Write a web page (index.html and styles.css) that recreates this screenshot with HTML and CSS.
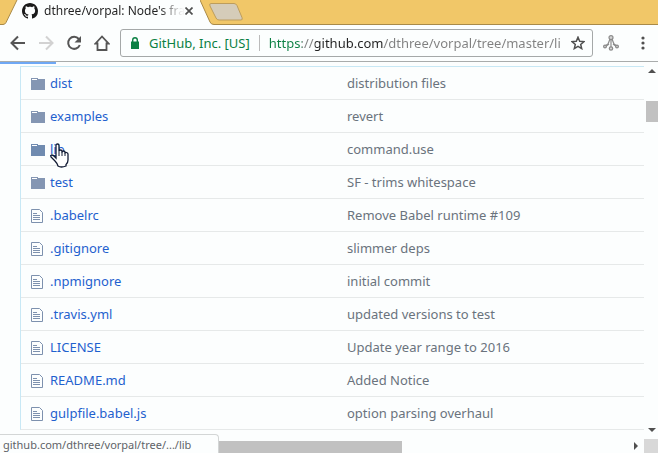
FILE: index.html
```html
<!DOCTYPE html>
<html lang="en">
<head>
<meta charset="utf-8">
<title>dthree/vorpal: Node's framework for interactive CLIs</title>
<link rel="stylesheet" href="styles.css">
</head>
<body>
<svg class="defs" aria-hidden="true">
  <symbol id="folder" viewBox="0 0 14 12">
    <path d="M0 0h7v1h7v11H0z" fill="currentColor"/>
    <path d="M1 1h5v1H1z" fill="#fff"/>
  </symbol>
  <symbol id="file" viewBox="0 0 12 14">
    <path d="M.5.5h8l3 3v10H.5z" fill="none" stroke="#7d91ae"/>
    <path d="M2 4.500h4M2 6.500h7M2 8.500h7M2 10.500h7" stroke="#7d91ae"/>
  </symbol>
</svg>
<header class="tabs">
  <div class="tab">
    <svg class="slant" width="18" height="25" viewBox="0 0 18 25"><path d="M0 25v-.500h3q2 0 3-2L17 0h1v25z" fill="#fcfefe"/><path d="M0 24.500h3q2 0 3-2L17 0" fill="none" stroke="#a98a48"/></svg>
    <div class="tab-body">
      <svg class="logo" width="16" height="16" viewBox="0 0 16 16"><path fill="#1b1b1b" d="M8 0C3.580 0 0 3.580 0 8c0 3.540 2.290 6.530 5.470 7.590.4.070.55-.17.55-.38 0-.19-.01-.82-.01-1.490-2.010.37-2.530-.49-2.690-.94-.09-.23-.48-.94-.82-1.130-.28-.15-.68-.52-.01-.53.63-.01 1.080.58 1.230.82.72 1.210 1.870.87 2.330.66.07-.52.28-.87.51-1.070-1.780-.2-3.640-.89-3.640-3.950 0-.87.31-1.590.82-2.150-.08-.2-.36-1.020.08-2.120 0 0 .67-.21 2.200.82.64-.18 1.320-.27 2-.27s1.360.09 2 .27c1.530-1.040 2.200-.82 2.200-.82.44 1.100.16 1.920.08 2.120.51.56.82 1.270.82 2.150 0 3.070-1.870 3.750-3.650 3.950.29.25.54.73.54 1.480 0 1.070-.01 1.930-.01 2.200 0 .21.15.46.55.38A8.010 8.010 0 0 0 16 8c0-4.420-3.580-8-8-8z"/></svg>
      <span class="tab-title">dthree/vorpal: Node's fra</span>
      <button class="plain close" aria-label="Close tab"><svg width="8" height="8" viewBox="0 0 8 8"><path d="M.5.5l7 7m0-7l-7 7" stroke="#505050" stroke-width="1.700"/></svg></button>
    </div>
    <svg class="slant" width="18" height="25" viewBox="0 0 18 25"><path d="M0 0l10 22q1 2.500 4 2.500h4v.500H0z" fill="#fcfefe"/><path d="M0 0l10 22q1 2.500 4 2.500h4" fill="none" stroke="#a98a48"/></svg>
  </div>
  <button class="plain new-tab" aria-label="New tab"><svg width="36" height="18" viewBox="0 0 36 18"><path d="M3 .5h23q2 0 3 2l5 12q1 2.500-1 2.500H11q-2 0-3-2L2 3Q1 .5 3 .5z" fill="#d5ccb9" stroke="#bd9d5c"/></svg></button>
</header>
<nav class="toolbar">
  <button class="plain" aria-label="Back"><svg width="16" height="16" viewBox="0 0 16 16"><path d="M15 8H2M8 1.500L1.500 8L8 14.500" fill="none" stroke="#555" stroke-width="2"/></svg></button>
  <button class="plain" aria-label="Forward"><svg width="16" height="16" viewBox="0 0 16 16"><path d="M1 8h13M8 1.500L14.500 8L8 14.500" fill="none" stroke="#d2d2d2" stroke-width="2"/></svg></button>
  <button class="plain" aria-label="Reload"><svg width="16" height="16" viewBox="0 0 16 16"><path d="M12.800 4A6 6 0 1 0 13.800 10" fill="none" stroke="#555" stroke-width="2"/><path d="M15 1v6.500H8.500z" fill="#555"/></svg></button>
  <button class="plain" aria-label="Home"><svg width="16" height="16" viewBox="0 0 16 16"><path d="M1.500 8.500L8 1.500l6.500 7H12.500V15H3.500V8.500z" fill="none" stroke="#555" stroke-width="1.800"/></svg></button>
  <div class="omnibox">
    <svg class="lock" width="8" height="12" viewBox="0 0 8 12"><path d="M0 4.500h8V12H0z" fill="#0b8043"/><path d="M1.700 5V3a2.300 2.300 0 0 1 4.600 0v2" fill="none" stroke="#0b8043" stroke-width="1.400"/></svg>
    <label class="site" for="url">GitHub, Inc. [US]</label>
    <input id="url" class="url" type="text" value="https://github.com/dthree/vorpal/tree/master/li" spellcheck="false">
    <button class="plain" aria-label="Bookmark"><svg width="14" height="14" viewBox="0 0 14 14"><path d="M7 1.200l1.700 4 4.200.4-3.200 2.800 1 4.200L7 10.400l-3.700 2.200 1-4.200-3.200-2.800 4.200-.4z" fill="none" stroke="#505050" stroke-width="1.500"/></svg></button>
  </div>
  <button class="plain" aria-label="Extension"><svg width="16" height="16" viewBox="0 0 16 16"><g fill="none" stroke="#8b8b8b" stroke-width="1.200"><path d="M8 4v8M7 4L5 9l-3 2M9 4l2 5 3 2M2 12l4-3M14 12l-4-3"/><g fill="#d5d5d5"><circle cx="8" cy="2.600" r="2"/><circle cx="2" cy="11.500" r="1.400"/><circle cx="14" cy="11.500" r="1.400"/><circle cx="8" cy="13.500" r="1.700"/></g></g></svg></button>
  <button class="plain menu" aria-label="Menu"><svg width="4" height="14" viewBox="0 0 4 14"><g fill="#505050"><circle cx="2" cy="2" r="1.600"/><circle cx="2" cy="7" r="1.600"/><circle cx="2" cy="12" r="1.600"/></g></svg></button>
</nav>
<main class="view">
  <div class="page">
    <div class="progress"></div>
    <table class="files">
      <tbody>
        <tr><td><svg class="icon folder"><use href="#folder"/></svg><a href="#">dist</a></td><td>distribution files</td></tr>
        <tr><td><svg class="icon folder"><use href="#folder"/></svg><a href="#">examples</a></td><td>revert</td></tr>
        <tr class="hovered"><td><svg class="icon folder"><use href="#folder"/></svg><a href="#">lib<svg class="pointer" width="20" height="25" viewBox="0 0 20 25"><path d="M6 14V2.500Q6 1 7.500 1T9 2.500V8q0-1 1.500-1T12 8.500v1Q12 8 13.500 8T15 9.500v1Q15 9 16.500 9.500T18 11v6q0 3-2 4.500V23q-5 2-8 0-1-3-3-5L1 14q-.5-2 1-2t4 3z" fill="#fff" stroke="#111a33" stroke-width="1.300"/><path d="M9 8v5M12 9v4M15 10v3" stroke="#111a33"/></svg></a></td><td>command.use</td></tr>
        <tr><td><svg class="icon folder"><use href="#folder"/></svg><a href="#">test</a></td><td>SF - trims whitespace</td></tr>
        <tr><td><svg class="icon file"><use href="#file"/></svg><a href="#">.babelrc</a></td><td>Remove Babel runtime #109</td></tr>
        <tr><td><svg class="icon file"><use href="#file"/></svg><a href="#">.gitignore</a></td><td>slimmer deps</td></tr>
        <tr><td><svg class="icon file"><use href="#file"/></svg><a href="#">.npmignore</a></td><td>initial commit</td></tr>
        <tr><td><svg class="icon file"><use href="#file"/></svg><a href="#">.travis.yml</a></td><td>updated versions to test</td></tr>
        <tr><td><svg class="icon file"><use href="#file"/></svg><a href="#">LICENSE</a></td><td>Update year range to 2016</td></tr>
        <tr><td><svg class="icon file"><use href="#file"/></svg><a href="#">README.md</a></td><td>Added Notice</td></tr>
        <tr><td><svg class="icon file"><use href="#file"/></svg><a href="#">gulpfile.babel.js</a></td><td>option parsing overhaul</td></tr>
      </tbody>
    </table>
  </div>
  <div class="vbar">
    <svg width="8" height="4" viewBox="0 0 8 4"><path d="M0 4L4 0l4 4z" fill="#505050"/></svg>
    <div class="vtrack"><div class="vthumb"></div></div>
    <svg width="8" height="4" viewBox="0 0 8 4"><path d="M0 0l4 4 4-4z" fill="#505050"/></svg>
  </div>
  <div class="hbar">
    <div class="htrack"><div class="hthumb"></div></div>
    <svg width="4" height="8" viewBox="0 0 4 8"><path d="M0 0l4 4-4 4z" fill="#505050"/></svg>
  </div>
  <div class="corner"></div>
  <div class="status">github.com/dthree/vorpal/tree/.../lib</div>
</main>
</body>
</html>
```
FILE: styles.css
```css
* { box-sizing: border-box; }

body {
  margin: 0;
  height: 100vh;
  display: flex;
  flex-direction: column;
  overflow: hidden;
  background: #fcfefe;
  color: #6a737d;
  font-family: "Noto Sans", "Open Sans", sans-serif;
  font-size: 13px;
}

svg { display: block; flex: none; }
.defs { position: absolute; width: 0; height: 0; }

.plain {
  flex: none;
  display: flex;
  padding: 0;
  border: 0;
  background: none;
}

.tabs {
  display: flex;
  flex: none;
  height: 25px;
  background: #f1c768;
  box-shadow: inset 0 -1px #a98a48;
}
.tab { display: flex; }
.tab-body {
  display: flex;
  align-items: center;
  width: 182px;
  padding: 0 7px 3px 4px;
  background: #fcfefe;
}
.tab-title {
  flex: 1;
  margin-left: 6px;
  white-space: nowrap;
  font-size: 12px;
  line-height: 16px;
  color: transparent;
  background: linear-gradient(to right, #222 82%, #f4f4f4 98%) text;
}
.new-tab { padding: 3px 0 0; margin-left: -10px; }

.toolbar {
  display: flex;
  flex: none;
  align-items: center;
  gap: 12px;
  height: 37px;
  padding: 0 13px 0 10px;
  border-bottom: 1px solid #a9acac;
}
.omnibox {
  display: flex;
  flex: 1;
  align-items: center;
  min-width: 0;
  height: 28px;
  margin: 0 -2px;
  padding: 0 7px 0 10px;
  border: 1px solid #a5a8a8;
  border-radius: 3px;
}
.site {
  flex: none;
  margin-left: 10px;
  padding-right: 9px;
  border-right: 1px solid #bbb;
  color: #0b8043;
  font-size: 13px;
  line-height: 16px;
}
.url {
  flex: 1;
  min-width: 0;
  margin: 0 6px 0 9px;
  padding: 0;
  border: 0;
  outline: 0;
  font: 13px/20px "Noto Sans", "Open Sans", sans-serif;
  color: transparent;
  background: linear-gradient(to right, #0b8043 33px, #808080 33px 46px, #222 46px 115px, #808080 115px) text;
}
.menu { margin-left: 10px; }

.view {
  position: relative;
  flex: 1;
  min-height: 0;
  display: grid;
  grid-template: minmax(0, 1fr) 14px / minmax(0, 1fr) 14px;
}
.page { overflow: hidden; padding-left: 20px; }
.progress {
  width: 56px;
  height: 2px;
  margin: 0 0 2px -20px;
  background: #6fa8f5;
}

.files {
  width: 100%;
  table-layout: fixed;
  border-collapse: separate;
  border-spacing: 0;
  border-left: 1px solid #c8e8f5;
  border-bottom: 1px solid #e6e9e9;
}
.files td {
  height: 33px;
  padding: 0;
  border-top: 1px solid #e6e9e9;
  line-height: 20px;
  white-space: nowrap;
}
.files tr:first-child td { border-top-color: #c8e8f5; }
.files td:first-child {
  width: 326px;
  padding-left: 10px;
}
.icon { display: inline-block; vertical-align: middle; margin-bottom: 2px; }
.folder { width: 14px; height: 12px; margin-right: 5px; color: #8496b3; }
.hovered .folder { color: #708bb0; }
.file { width: 12px; height: 14px; margin-right: 7px; }
.files a { position: relative; color: #1f61ce; text-decoration: none; }
.hovered a { text-decoration: underline; }
.pointer { position: absolute; left: 0; top: 3px; }

.vbar {
  display: flex;
  flex-direction: column;
  align-items: center;
  padding: 7px 0 7px 2px;
}
.vtrack { flex: 1; align-self: stretch; padding-top: 28px; }
.vthumb { height: 21px; background: #c1c1c1; }

.hbar { display: flex; align-items: center; padding-right: 6px; }
.htrack { flex: 1; padding-top: 2px; }
.hthumb { width: 63.4%; height: 12px; background: #c1c1c1; }
.corner { background: #d8d8d8; }

.status {
  position: absolute;
  left: 0;
  bottom: 0;
  width: 219px;
  height: 19px;
  padding-left: 3px;
  border: solid #d3d6d6;
  border-width: 1px 1px 0 0;
  border-radius: 0 4px 0 0;
  background: #fcfefe;
  color: #5f6368;
  font-size: 11px;
  line-height: 20px;
  white-space: nowrap;
}
```
